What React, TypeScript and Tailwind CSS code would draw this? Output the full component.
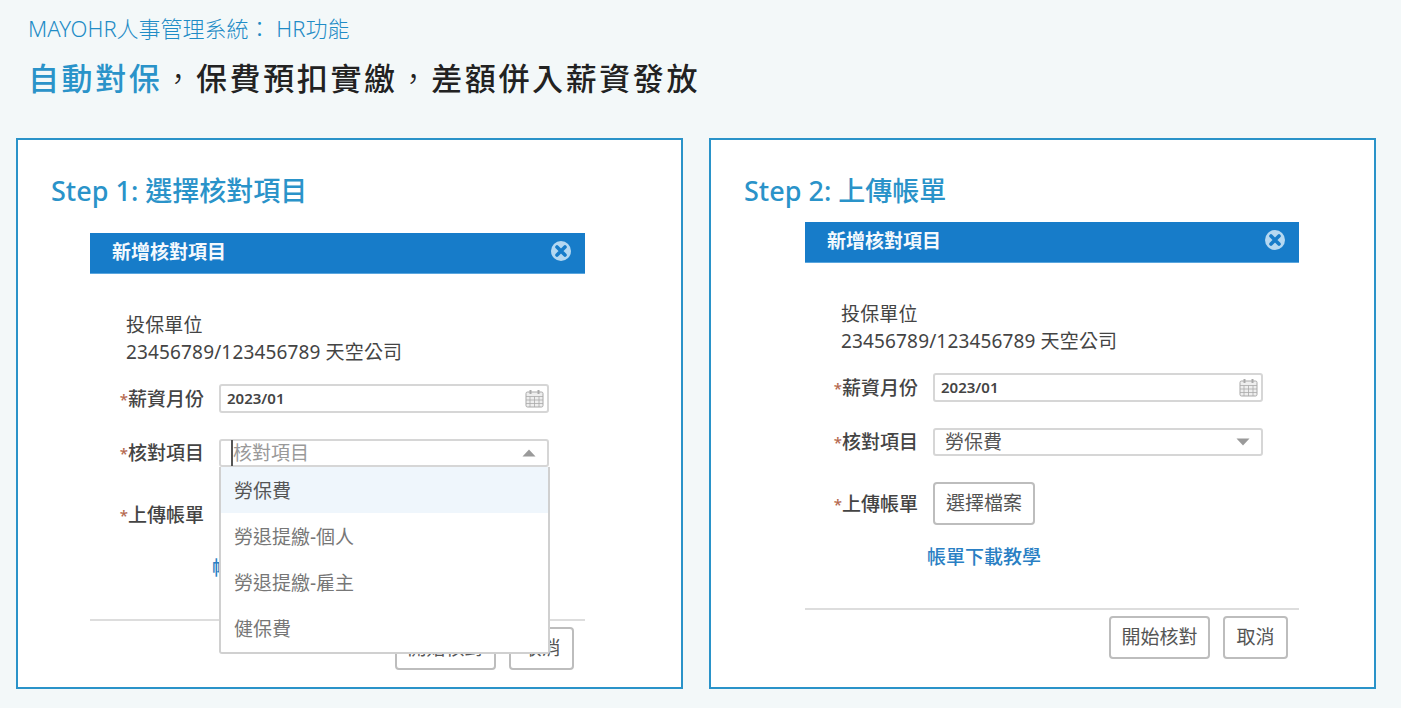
import React from 'react';

const options = ['勞保費', '勞退提繳-個人', '勞退提繳-雇主', '健保費'];

const CloseIcon = () => (
  <svg width="22" height="22" viewBox="0 0 22 22" className="mt-[-5px]">
    <circle cx="11" cy="11" r="10" fill="#b5d8f1" />
    <path d="M7 7l8 8M15 7l-8 8" stroke="#177cc9" strokeWidth="3.6" strokeLinecap="round" />
  </svg>
);

const CalendarIcon = () => (
  <svg width="19" height="19" viewBox="0 0 19 19" fill="none" stroke="#a9a9a9">
    <rect x="1" y="3" width="17" height="15" rx="1.5" fill="#eeeeee" />
    <path d="M1 7.5h17M1 11h17M1 14.5h17M5 7.5V18M9.5 7.5V18M14 7.5V18" strokeWidth="0.8" />
    <path d="M5.5 1v4M13.5 1v4" strokeWidth="2" />
  </svg>
);

const Caret = ({ up }: { up?: boolean }) => (
  <svg width="14" height="8" viewBox="0 0 14 8">
    <path d={up ? 'M7 0.5L13.5 7.5H0.5Z' : 'M0.5 0.5H13.5L7 7.5Z'} fill="#9a9a9a" />
  </svg>
);

const FormRow = ({ label, children }: { label: string; children: React.ReactNode }) => (
  <div className="flex items-center">
    <div className="w-[114px] text-right text-[19px] leading-[26px] font-medium text-[#444]">
      <span className="text-[#b5694f] text-[15px] align-top">*</span>
      {label}
    </div>
    <div className="ml-[15px]">{children}</div>
  </div>
);

const OutlineButton = ({ text, className }: { text: string; className: string }) => (
  <button className={`h-[43px] border-2 border-[#bdbdbd] rounded-[4px] bg-white text-[19px] text-[#555] ${className}`}>
    {text}
  </button>
);

const Dialog = ({ open, className, rowsClass }: { open: boolean; className: string; rowsClass: string }) => (
  <div className={className}>
    <div className="h-[41px] bg-[#177cc9] border-b border-[#5aa6de] flex items-center justify-between pl-[22px] pr-[13px]">
      <span className="text-[19px] font-bold text-[#f4f9fd] mt-[-1px]">新增核對項目</span>
      <CloseIcon />
    </div>

    <div className="pl-[36px] pt-[38px] text-[19px] leading-[27px] tracking-[0.15px] text-[#444]">
      <div>投保單位</div>
      <div>23456789/123456789 天空公司</div>
    </div>

    <div className={`mt-[18px] flex flex-col gap-[26px] ${rowsClass}`}>
      <FormRow label="薪資月份">
        <div className="w-[330px] h-[29px] border-2 border-[#d6d6d6] rounded-[3px] flex items-center justify-between pl-[6px] pr-[3px]">
          <span className="text-[15px] font-semibold text-[#444]">2023/01</span>
          <CalendarIcon />
        </div>
      </FormRow>

      <FormRow label="核對項目">
        <div className="relative">
          <div className="w-[330px] h-[28px] border-2 border-[#d6d6d6] rounded-[3px] flex items-center justify-between pl-[10px] pr-[11px] text-[19px]">
            {open ? (
              <span className="border-l-2 border-[#555] leading-[26px] text-[#999]">核對項目</span>
            ) : (
              <span className="text-[#555]">勞保費</span>
            )}
            <Caret up={open} />
          </div>
          {open && (
            <ul className="absolute left-0 top-[28px] z-10 w-[331px] h-[187px] bg-white border-2 border-t-0 border-[#d0d0d0] rounded-b-[3px] text-[19px] text-[#777]">
              {options.map((item, i) => (
                <li
                  key={item}
                  className={`h-[46px] pl-[13px] pt-[2px] flex items-center ${i === 0 ? 'bg-[#eff6fc] text-[#555]' : ''}`}
                >
                  {item}
                </li>
              ))}
            </ul>
          )}
        </div>
      </FormRow>

      <FormRow label="上傳帳單">
        <OutlineButton text="選擇檔案" className="w-[102px]" />
      </FormRow>
    </div>

    <div className="mt-[19px] ml-[122px] text-[19px] leading-[26px] font-medium text-[#2a7fc4]">帳單下載教學</div>

    <div className="mt-[38px] border-t-2 border-[#dddddd] pt-[6px] pr-[11px] flex justify-end gap-[13px]">
      <OutlineButton text="開始核對" className="w-[101px]" />
      <OutlineButton text="取消" className="w-[65px]" />
    </div>
  </div>
);

const App = () => {
  return (
    <div className="h-[708px] overflow-hidden bg-[#f3f8f9] font-['Noto_Sans','Noto_Sans_CJK_TC',sans-serif]">
      <div className="pt-[13px] pl-[28px]">
        <p className="text-[22px] leading-[30px] font-light text-[#1f8cc6]">MAYOHR人事管理系統： HR功能</p>
        <h1 className="mt-[13px] text-[31px] leading-[44px] font-medium tracking-[2.6px] text-[#222]">
          <span className="text-[#2a93c9]">自動對保</span>
          <span className="font-light">，</span>保費預扣實繳<span className="font-light">，</span>差額併入薪資發放
        </h1>
      </div>

      <div className="mt-[38px] ml-[16px] grid grid-cols-[667px_667px] gap-[26px]">
        <section className="h-[551px] bg-white border-2 border-[#2a93c9] pt-[33px]">
          <h2 className="ml-[33px] text-[27px] leading-[36px] font-medium text-[#2a93c9]">Step 1: 選擇核對項目</h2>
          <div className="mt-[24px] ml-[72px]">
            <Dialog open className="w-[495px]" rowsClass="" />
          </div>
        </section>
        <section className="h-[551px] bg-white border-2 border-[#2a93c9] pt-[33px]">
          <h2 className="ml-[33px] text-[27px] leading-[36px] font-medium text-[#2a93c9]">Step 2: 上傳帳單</h2>
          <div className="mt-[13px] ml-[94px]">
            <Dialog open={false} className="w-[494px]" rowsClass="ml-[-1px]" />
          </div>
        </section>
      </div>
    </div>
  );
};

export default App;
